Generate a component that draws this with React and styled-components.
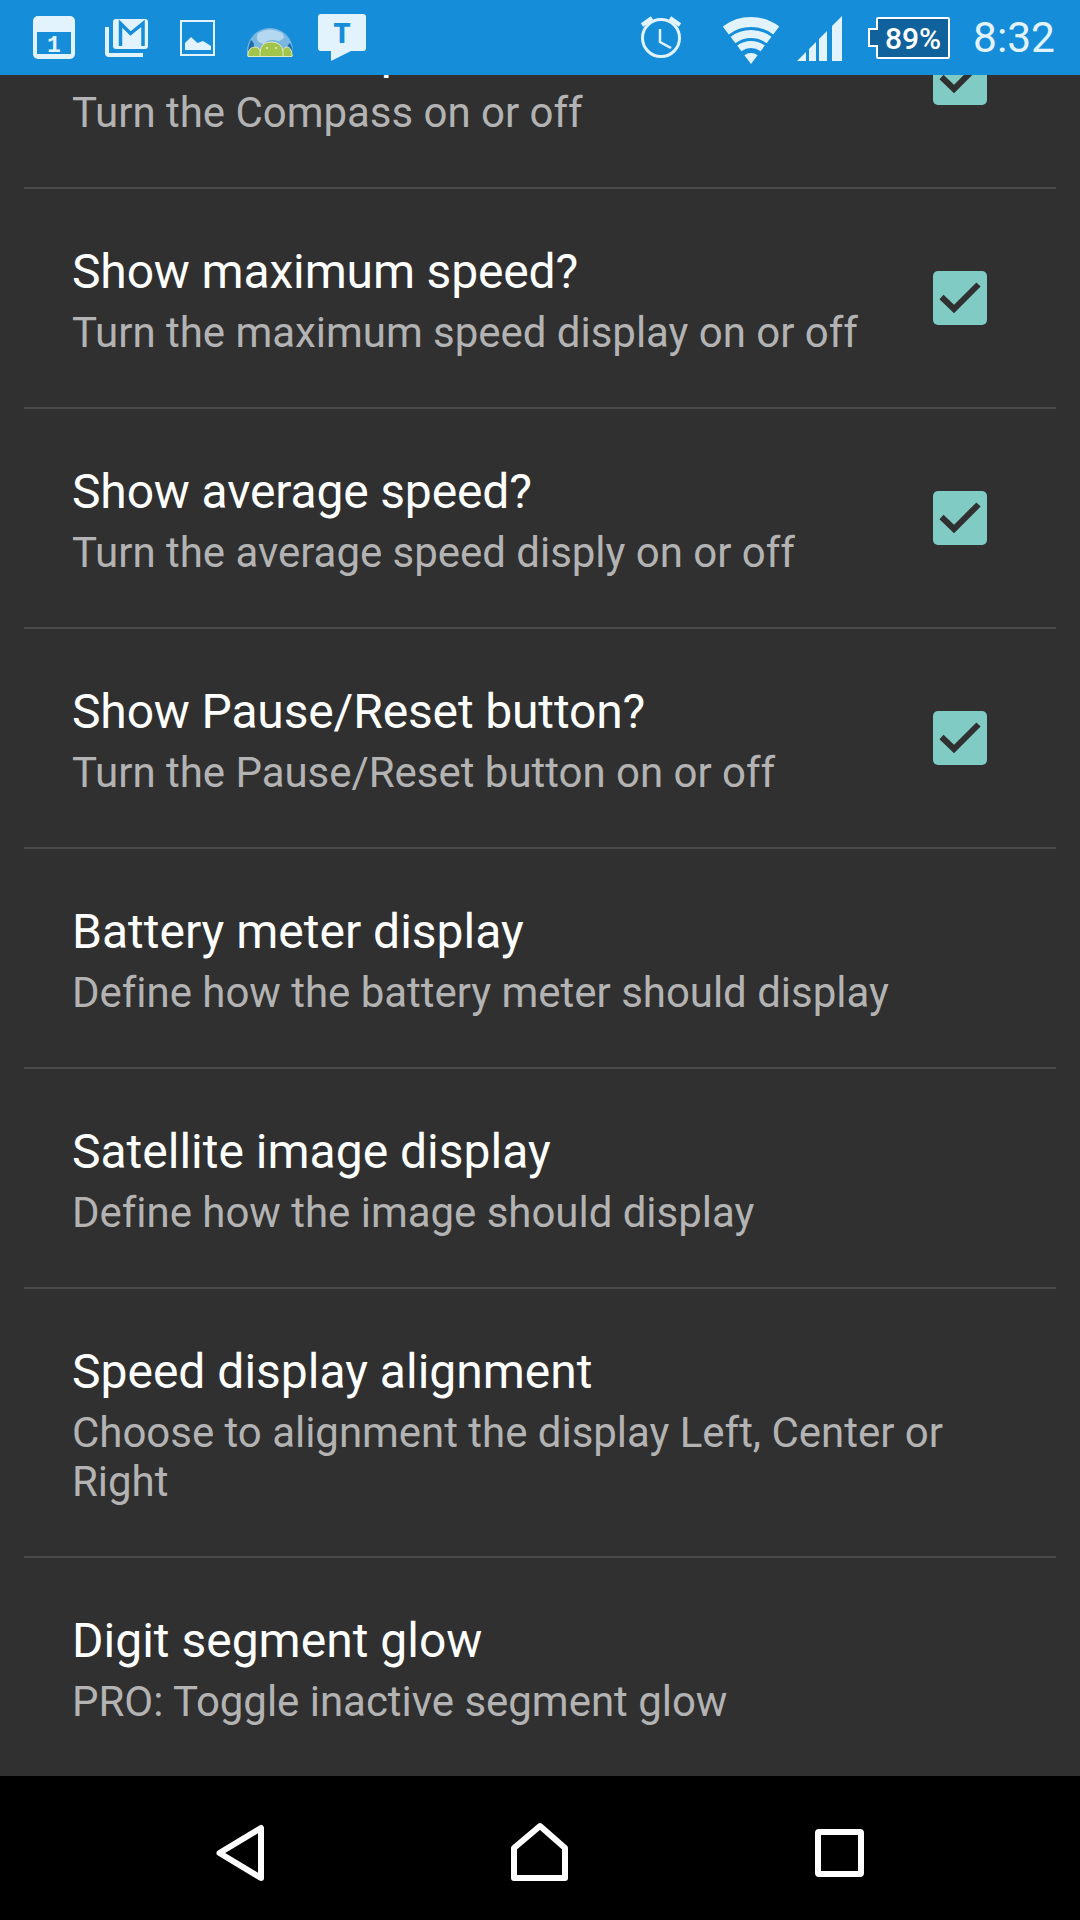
import React from 'react';
import styled, { createGlobalStyle } from 'styled-components';

const Global = createGlobalStyle`
  html, body { margin: 0; padding: 0; background: #303030; }
  #root { width: 1080px; height: 1920px; }
`;
const Page = styled.div`
  width: 1080px; height: 1920px; display: flex; flex-direction: column; overflow: hidden;
  background: #303030; font-family: Roboto, "Liberation Sans", sans-serif;
`;
const StatusBar = styled.header`
  height: 75px; flex: none; background: #158dd9; display: flex; align-items: center;
  padding: 0 25px 0 33px; position: relative; z-index: 2; color: #e3f3fd;
`;
const Tray = styled.div`display: flex; align-items: center;`;
const RightTray = styled(Tray)`margin-left: auto;`;
const Glyph = styled.svg`display: block; height: 75px; flex: none; margin-left: ${p => p.$gap || 0}px;`;
const Battery = styled.div`
  width: 74px; height: 42px; box-sizing: border-box; border: 2px solid #fff; border-radius: 2px; margin: 1px 0 0 34px;
  background: #10629c; color: #fff; font-size: 30px; font-weight: 500; display: flex; align-items: center; justify-content: center;
  position: relative;
  &::before { content: ""; position: absolute; left: -10px; top: 9px; width: 10px; height: 19px; border: 2px solid #fff; border-right: 0; box-sizing: border-box; background: #10629c; }
`;
const Clock = styled.span`font-size: 42.5px; color: #e3f3fd; margin-left: 23px; line-height: 75px;`;
const Content = styled.main`flex: 1; overflow: hidden; display: flex; flex-direction: column; min-height: 0;`;
const List = styled.div`margin: -106px 24px 0; display: flex; flex-direction: column; flex: none;`;
const Row = styled.div`
  display: flex; align-items: center; padding: 55px 0 50px 48px;
  border-bottom: 2px solid #4a4a4a; &:last-child { border-bottom: 0; }
`;
const Texts = styled.div`flex: 1; min-width: 0; padding-right: 60px;`;
const Title = styled.div`font-size: 48px; line-height: 56px; color: #fff; letter-spacing: ${p => (p.$tight ? '-0.15px' : '0')};`;
const Sub = styled.div`font-size: 42px; line-height: 49px; color: #b3b3b3; margin-top: 8px; letter-spacing: -0.03px;`;
const Check = styled.div`
  width: 54px; height: 54px; flex: none; margin: -5px 69px 0 0; background: #80cbc4; border-radius: 5px;
  display: flex;
`;
const NavBar = styled.nav`
  height: 144px; flex: none; background: #000; padding: 0 90px; display: grid; grid-template-columns: repeat(3, 1fr); justify-items: center;
`;
const NavGlyph = styled.svg`display: block; height: 144px;`;

const rows = [
  ['Show the Compass?', 'Turn the Compass on or off', true],
  ['Show maximum speed?', 'Turn the maximum speed display on or off', true],
  ['Show average speed?', 'Turn the average speed disply on or off', true],
  ['Show Pause/Reset button?', 'Turn the Pause/Reset button on or off', true],
  ['Battery meter display', 'Define how the battery meter should display'],
  ['Satellite image display', 'Define how the image should display'],
  ['Speed display alignment', 'Choose to alignment the display Left, Center or Right'],
  ['Digit segment glow', 'PRO: Toggle inactive segment glow'],
];

const ink = '#e3f3fd';
const bar = '#158dd9';

export default function App() {
  return (
    <Page>
      <Global />
      <StatusBar>
        <Tray>
          <Glyph width="42" viewBox="33 0 42 75">
            <rect x="33" y="16" width="42" height="43" rx="5" fill={ink} />
            <rect x="37" y="32" width="34" height="22" fill={bar} />
            <text x="54" y="51.500" textAnchor="middle" fontFamily="Liberation Mono" fontWeight="700" fontSize="23" fill={ink}>1</text>
          </Glyph>
          <Glyph $gap={30} width="43" viewBox="105 0 43 75">
            <path d="M107 27 V53 Q107 55 109 55 H143" fill="none" stroke={ink} strokeWidth="4" />
            <rect x="113" y="19" width="35" height="30" rx="3" fill={ink} />
            <path d="M120.500 46 V23.500 L130.500 33.500 L143 23.500 V46" fill="none" stroke={bar} strokeWidth="3.500" />
          </Glyph>
          <Glyph $gap={32} width="35" viewBox="180 0 35 75">
            <rect x="181" y="21" width="33" height="34" fill="none" stroke={ink} strokeWidth="2" />
            <path d="M185 50 V43 L191 37 L197.500 43 L203 41 L211 46 V50 Z" fill={ink} />
          </Glyph>
          <Glyph $gap={32} width="46" viewBox="247 0 46 75">
            <path d="M247 51 A23 23 0 0 1 293 51 V56 H247 Z" fill="#79b6e0" />
            <path d="M258 33 Q270 26 282 33 Q287 38 279 41 Q268 38 264 44 Q254 42 258 33 Z" fill="#b4d8f0" />
            <path d="M248 54 Q248 46 251 40 Q254 42 254 46 L257 50 V55 H248 Z" fill="#1c6cb2" />
            <path d="M293 54 Q293 48 290 43 Q287 45 287 48 L284 50 V55 H292 Z" fill="#1c6cb2" />
            <path d="M248 56.500 V54 Q249 47 255 47 Q260 47 261 54 V56.500 Z" fill="#a3c44a" stroke="#dfe9c0" strokeWidth="1" />
            <path d="M282 56.500 V54 Q283 47 287 47 Q291 47 292 54 V56.500 Z" fill="#a3c44a" stroke="#dfe9c0" strokeWidth="1" />
            <path d="M260 56.500 V52 Q261 42 271 42 Q282 42 283 52 V56.500 Z" fill="#a3c44a" stroke="#dfe9c0" strokeWidth="1" />
            <circle cx="267" cy="48" r="1" fill="#e6efcf" />
            <circle cx="276" cy="48" r="1" fill="#e6efcf" />
          </Glyph>
          <Glyph $gap={25} width="48" viewBox="318 0 48 75">
            <path d="M321 14 H363 Q366 14 366 17 V48 Q366 51 363 51 H351 L331 61 V51 H321 Q318 51 318 48 V17 Q318 14 321 14 Z" fill={ink} />
            <text x="342" y="43" textAnchor="middle" fontFamily="Roboto" fontWeight="900" fontSize="27" fill={bar}>T</text>
          </Glyph>
        </Tray>
        <RightTray>
          <Glyph width="43" viewBox="641 0 43 75">
            <circle cx="662" cy="38" r="18.500" fill="none" stroke={ink} strokeWidth="3" />
            <path d="M661 29 V42 L672 48" fill="none" stroke={ink} strokeWidth="2.500" />
            <path d="M643 25 L653 18 M681 25 L671 18" fill="none" stroke={ink} strokeWidth="4" />
          </Glyph>
          <Glyph $gap={39} width="58" viewBox="723 0 58 75">
            <g fill="none" stroke={ink}>
              <path d="M726.800 30.400 A42 42 0 0 1 777.200 30.400" strokeWidth="10" />
              <path d="M734 40 A30 30 0 0 1 770 40" strokeWidth="8" />
              <path d="M740.300 48.400 A19.500 19.500 0 0 1 763.700 48.400" strokeWidth="7" />
            </g>
            <path d="M752 64 L745.400 55.200 A11 11 0 0 1 758.600 55.200 Z" fill={ink} />
          </Glyph>
          <Glyph $gap={17} width="45" viewBox="798 0 45 75">
            <path d="M798 61 L807 52 V61 Z M810 49 L817 42 V61 H810 Z M820 39 L828 31 V61 H820 Z M833 26 L843 16 V61 H833 Z" fill={ink} />
          </Glyph>
          <Battery>89%</Battery>
          <Clock>8:32</Clock>
        </RightTray>
      </StatusBar>
      <Content>
        <List>
          {rows.map(([t, s, c]) => (
            <Row key={t}>
              <Texts><Title $tight={t.startsWith('Show')}>{t}</Title><Sub>{s}</Sub></Texts>
              {c && (
                <Check>
                  <svg width="54" height="54" viewBox="0 0 54 54">
                    <path d="M8.500 26 L21 38 L45.500 13.500" fill="none" stroke="#303030" strokeWidth="6" />
                  </svg>
                </Check>
              )}
            </Row>
          ))}
        </List>
      </Content>
      <NavBar>
        <NavGlyph width="50" viewBox="215 1776 50 144">
          <path d="M219.500 1853 L261 1828 V1878 Z" fill="none" stroke="#fff" strokeWidth="6" strokeLinejoin="round" />
        </NavGlyph>
        <NavGlyph width="58" viewBox="512 1776 58 144">
          <path d="M541 1826 L566 1848 V1878 H515 V1848 Z" fill="none" stroke="#fff" strokeWidth="6" strokeLinejoin="round" />
        </NavGlyph>
        <NavGlyph width="50" viewBox="817 1776 50 144">
          <rect x="820" y="1832" width="43" height="42" rx="1" fill="none" stroke="#fff" strokeWidth="6" />
        </NavGlyph>
      </NavBar>
    </Page>
  );
}
